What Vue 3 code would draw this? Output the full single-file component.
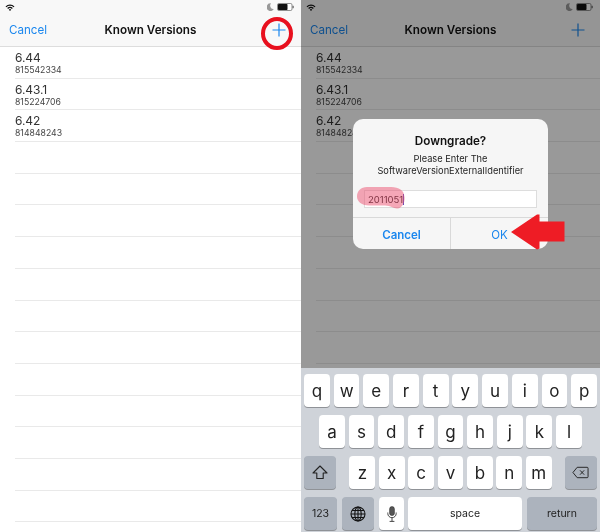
<template>
  <div class="screens">
    <div v-for="pane in panes" :key="pane" class="phone" :class="pane">
      <div class="status">
        <svg class="wifi" width="10" height="7" viewBox="0 0 10 7">
          <path d="M0.5 2.4a6.4 6.4 0 0 1 9 0L8.6 3.3a5.1 5.1 0 0 0-7.2 0z" fill="#111" />
          <path d="M2.2 4.1a4 4 0 0 1 5.6 0L6.9 5a2.7 2.7 0 0 0-3.8 0z" fill="#111" />
          <path d="M3.8 5.7a1.7 1.7 0 0 1 2.4 0L5 6.9z" fill="#111" />
        </svg>
        <div class="status-right">
          <svg width="7" height="8" viewBox="0 0 7 8">
            <path d="M4 0.4A3.8 3.8 0 1 0 6.8 6 3.4 3.4 0 0 1 4 0.4z" fill="#999" />
          </svg>
          <svg width="18" height="8" viewBox="0 0 18 8">
            <rect x="0.5" y="0.5" width="14.5" height="7" rx="1.4" fill="#fff" stroke="#444" stroke-width="0.6" />
            <rect x="1" y="1" width="9.5" height="6" rx="0.8" fill="#111" />
            <rect x="15.6" y="2.8" width="1" height="2.4" fill="#444" />
          </svg>
        </div>
      </div>
      <div class="nav">
        <span class="nav-cancel">Cancel</span>
        <span class="nav-title">Known Versions</span>
        <svg class="nav-plus" width="14" height="14" viewBox="0 0 14 14">
          <path d="M7 0.5v13M0.5 7h13" stroke="#1b87ee" stroke-width="1.2" fill="none" />
        </svg>
      </div>
      <div class="list">
        <div v-for="row in versions" :key="row.name" class="row">
          <div class="row-name">{{ row.name }}</div>
          <div class="row-id">{{ row.id }}</div>
        </div>
        <div v-for="n in 13" :key="n" class="row"></div>
      </div>

      <template v-if="pane === 'left'">
        <div class="circle"></div>
      </template>

      <template v-else>
        <div class="dim">
          <div class="dialog">
            <div class="dialog-body">
              <div class="dialog-title">Downgrade?</div>
              <div class="dialog-msg">Please Enter The<br />SoftwareVersionExternalIdentifier</div>
              <div class="dialog-input">
                <span>2011051</span><i class="caret"></i>
              </div>
            </div>
            <div class="dialog-actions">
              <div class="action bold">Cancel</div>
              <div class="action">OK</div>
            </div>
          </div>
          <svg class="blob" width="50" height="22" viewBox="0 0 50 22">
            <path d="M10 0H34C42 0 47 4 47 8C49 13 46 21.5 40 21.5C36 21.5 34 18.5 28 18.5H12C4 18.5 0 14 0 9.5C0 4 4 0 10 0z" fill="#ec5070" fill-opacity="0.5" />
          </svg>
          <svg class="arrow" width="54" height="36" viewBox="0 0 54 36">
            <path d="M0 18L26 0.5H28.5V7.5H53.5V27.5H28.5V34.5L26 35.5z" fill="#ee1c25" />
          </svg>
        </div>
        <div class="keyboard">
          <div class="key-row">
            <div v-for="k in rowOne" :key="k" class="key">{{ k }}</div>
          </div>
          <div class="key-row inset">
            <div v-for="k in rowTwo" :key="k" class="key">{{ k }}</div>
          </div>
          <div class="key-row">
            <div class="key dark shift">
              <svg width="16" height="15" viewBox="0 0 16 15">
                <path d="M8 1L15 8H11.2V13.5H4.8V8H1z" fill="none" stroke="#222" stroke-width="1.1" stroke-linejoin="round" />
              </svg>
            </div>
            <div class="letters">
              <div v-for="k in rowThree" :key="k" class="key">{{ k }}</div>
            </div>
            <div class="key dark shift">
              <svg width="17" height="13" viewBox="0 0 18 13">
                <path d="M5.5 1H16a1 1 0 0 1 1 1v9a1 1 0 0 1-1 1H5.5L1 6.5z" fill="none" stroke="#222" stroke-width="1" stroke-linejoin="round" />
                <path d="M8.5 4.2l4.4 4.6M12.9 4.2L8.5 8.8" stroke="#222" stroke-width="1" fill="none" />
              </svg>
            </div>
          </div>
          <div class="key-row bottom">
            <div class="key dark small num">123</div>
            <div class="key dark globe">
              <svg width="16" height="16" viewBox="0 0 16 16">
                <g fill="none" stroke="#111" stroke-width="1.1">
                  <circle cx="8" cy="8" r="7" />
                  <ellipse cx="8" cy="8" rx="3.2" ry="7" />
                  <path d="M8 1v14M1 8h14M2 4.5h12M2 11.5h12" />
                </g>
              </svg>
            </div>
            <div class="key mic">
              <svg width="10" height="16" viewBox="0 0 10 16">
                <rect x="2.6" y="0.6" width="4.8" height="9" rx="2.4" fill="#555" stroke="#333" stroke-width="0.6" />
                <path d="M0.8 6.5v1a4.2 4.2 0 0 0 8.4 0v-1M5 11.7v3.6M2.6 15.4h4.8" fill="none" stroke="#333" stroke-width="0.9" />
              </svg>
            </div>
            <div class="key small space">space</div>
            <div class="key dark small ret">return</div>
          </div>
        </div>
      </template>
    </div>
  </div>
</template>

<script setup>
const panes = ['left', 'right'];

const versions = [
  { name: '6.44', id: '815542334' },
  { name: '6.43.1', id: '815224706' },
  { name: '6.42', id: '814848243' }
];

const rowOne = ['q', 'w', 'e', 'r', 't', 'y', 'u', 'i', 'o', 'p'];
const rowTwo = ['a', 's', 'd', 'f', 'g', 'h', 'j', 'k', 'l'];
const rowThree = ['z', 'x', 'c', 'v', 'b', 'n', 'm'];
</script>

<style>
html, body {
  margin: 0;
  background: #fff;
}
</style>

<style scoped>
/* the source screenshot is a soft, upscaled capture */
.screens {
  display: flex;
  width: 600px;
  height: 532px;
  overflow: hidden;
  font-family: Inter, "Liberation Sans", sans-serif;
  color: #222;
  filter: blur(0.35px);
}

.phone {
  position: relative;
  height: 532px;
  overflow: hidden;
  background: #fff;
}

.left {
  width: 301px;
}

.right {
  width: 299px;
}

.status {
  display: flex;
  justify-content: space-between;
  align-items: center;
  height: 14px;
  padding: 0 6px 0 5px;
  background: #f8f8f8;
}

.status-right {
  display: flex;
  align-items: center;
  gap: 3px;
}

.nav {
  display: flex;
  justify-content: space-between;
  align-items: center;
  height: 32px;
  padding: 0 15px 0 9px;
  background: #f8f8f8;
  border-bottom: 1px solid #ddd;
}

.nav-cancel {
  width: 60px;
  font-size: 11.6px;
  color: #1b87ee;
}

.nav-title {
  font-size: 11.7px;
  font-weight: 600;
  color: #111;
}

.nav-plus {
  margin-left: 40px;
}

.list {
  padding-left: 15px;
}

.row {
  box-sizing: border-box;
  height: 31.7px;
  padding-top: 4px;
  border-bottom: 1px solid #e9e9e9;
}

.row-name {
  font-size: 12px;
  line-height: 14px;
  letter-spacing: -0.1px;
  color: #333;
}

.row-id {
  font-size: 8.7px;
  line-height: 10px;
  color: #444;
}

.circle {
  position: absolute;
  left: 261px;
  top: 17px;
  box-sizing: border-box;
  width: 32px;
  height: 33px;
  border: 4.5px solid #e8101e;
  border-radius: 50%;
}

.dim {
  position: absolute;
  left: 0;
  right: 0;
  top: 0;
  height: 368px;
  background: rgba(0, 0, 0, 0.4);
}

.dialog {
  position: absolute;
  left: 52px;
  top: 119px;
  width: 195px;
  height: 130px;
  display: flex;
  flex-direction: column;
  background: #f6f6f6;
  border-radius: 10px;
}

.dialog-body {
  flex: 1;
  padding: 14px 11px 0;
  text-align: center;
}

.dialog-title {
  font-size: 11.7px;
  line-height: 16px;
  font-weight: 600;
  color: #111;
}

.dialog-msg {
  margin-top: 4px;
  font-size: 9.25px;
  line-height: 12px;
  color: #222;
}

.dialog-input {
  display: flex;
  align-items: center;
  height: 18px;
  margin-top: 13px;
  padding-left: 3px;
  box-sizing: border-box;
  background: #fff;
  border: 1px solid #ddd;
  font-size: 9.5px;
  color: #111;
  text-align: left;
}

.caret {
  width: 1px;
  height: 11px;
  background: #5b4fc0;
}

.dialog-actions {
  display: flex;
  height: 31px;
  border-top: 1px solid #d9d9d9;
}

.action {
  flex: 1;
  display: flex;
  justify-content: center;
  align-items: center;
  padding-top: 2px;
  font-size: 11.5px;
  color: #1b87ee;
}

.action.bold {
  flex: 0 0 97px;
  border-right: 1px solid #d9d9d9;
  font-weight: 600;
}

.blob {
  position: absolute;
  left: 56px;
  top: 187px;
}

.arrow {
  position: absolute;
  left: 210px;
  top: 214px;
}

.keyboard {
  position: absolute;
  left: 0;
  right: 0;
  top: 368px;
  height: 164px;
  padding: 6px 3px 0;
  box-sizing: border-box;
  display: flex;
  flex-direction: column;
  gap: 8px;
  background: #cfd3d9;
}

.key-row {
  display: flex;
  justify-content: space-between;
  height: 33px;
}

.key-row.inset {
  padding: 0 15px;
}

.letters {
  display: flex;
  gap: 3.6px;
}

.key {
  display: flex;
  justify-content: center;
  align-items: center;
  width: 25.8px;
  background: #fff;
  border-radius: 4px;
  box-shadow: 0 1px 0 #8f9297;
  font-size: 17px;
  color: #222;
}

.key-row.bottom {
  justify-content: flex-start;
  gap: 5px;
}

.key.dark {
  background: #acb3bd;
}

.key.small {
  font-size: 10.5px;
}

.shift {
  width: 32px;
}

.num {
  width: 33px;
}

.globe {
  width: 32px;
}

.mic {
  width: 25px;
  margin-right: -1px;
}

.space {
  width: 114px;
}

.ret {
  width: 70px;
}
</style>
